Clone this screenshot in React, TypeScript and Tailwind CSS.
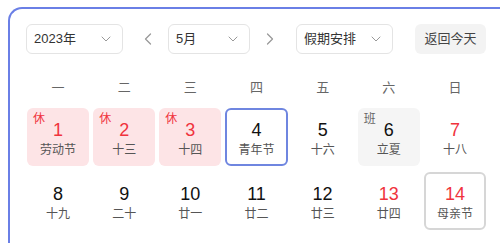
import { ChevronDown, ChevronLeft, ChevronRight } from "lucide-react";

type Day = {
  n: number;
  sub: string;
  tag?: "休" | "班";
  red?: boolean;
  today?: boolean;
  selected?: boolean;
};

const days: Day[] = [
  { n: 1, sub: "劳动节", tag: "休", red: true },
  { n: 2, sub: "十三", tag: "休", red: true },
  { n: 3, sub: "十四", tag: "休", red: true },
  { n: 4, sub: "青年节", today: true },
  { n: 5, sub: "十六" },
  { n: 6, sub: "立夏", tag: "班" },
  { n: 7, sub: "十八", red: true },
  { n: 8, sub: "十九" },
  { n: 9, sub: "二十" },
  { n: 10, sub: "廿一" },
  { n: 11, sub: "廿二" },
  { n: 12, sub: "廿三" },
  { n: 13, sub: "廿四", red: true },
  { n: 14, sub: "母亲节", red: true, selected: true },
];

const weekdays = ["一", "二", "三", "四", "五", "六", "日"];

function Select({ label, width }: { label: string; width: string }) {
  return (
    <div
      className={`flex h-[30px] items-center justify-between rounded-md border border-[#e4e4e4] bg-white pl-[7px] pr-[8px] text-[13px] text-[#333] ${width}`}
    >
      <span>{label}</span>
      <ChevronDown size={16} strokeWidth={1.5} className="text-[#999]" />
    </div>
  );
}

function Cell({ d }: { d: Day }) {
  let box = "border border-transparent";
  if (d.tag === "休") box = "border border-transparent bg-[#fde4e6]";
  if (d.tag === "班") box = "border border-transparent bg-[#f5f5f5]";
  if (d.today) box = "border-2 border-[#6f86e0]";
  if (d.selected) box = "border-2 border-[#d6d6d6]";
  return (
    <div className={`relative flex h-[58px] flex-col items-center justify-center rounded-md ${box}`}>
      {d.tag && (
        <span
          className={`absolute left-[5px] top-[4px] text-[12px] leading-none ${
            d.tag === "休" ? "text-[#f0333d]" : "text-[#666]"
          }`}
        >
          {d.tag}
        </span>
      )}
      <span
        className={`mt-[2px] text-[18px] leading-[20px] ${d.red ? "text-[#f0333d]" : "text-[#111]"}`}
      >
        {d.n}
      </span>
      <span className="mt-[3px] text-[12px] leading-[14px] text-[#555]">{d.sub}</span>
    </div>
  );
}

export default function App() {
  return (
    <div
      className="h-[243px] w-[500px] overflow-hidden bg-white"
      style={{ fontFamily: '"Liberation Sans", "Noto Sans CJK SC", sans-serif' }}
    >
      <div className="ml-[8px] mt-[7px] h-[300px] w-[560px] rounded-tl-[14px] border-l-2 border-t-2 border-[#6a7fe6] pl-[16px] pt-[15px]">
        <div className="flex items-center">
          <Select label="2023年" width="w-[97px]" />
          <ChevronLeft size={20} strokeWidth={1.5} className="ml-[15px] text-[#999]" />
          <div className="ml-[10px]">
            <Select label="5月" width="w-[82px]" />
          </div>
          <ChevronRight size={20} strokeWidth={1.5} className="ml-[10px] text-[#999]" />
          <div className="ml-[16px]">
            <Select label="假期安排" width="w-[97px]" />
          </div>
          <div className="ml-[22px] flex h-[30px] w-[71px] items-center justify-center rounded-md bg-[#f3f3f3] text-[13px] text-[#444]">
            返回今天
          </div>
        </div>

        <div className="ml-[1px] mt-[24px] grid w-[459px] grid-cols-7 gap-x-[4px] text-center text-[13px] leading-[20px] text-[#666]">
          {weekdays.map((w) => (
            <div key={w}>{w}</div>
          ))}
        </div>

        <div className="ml-[1px] mt-[10px] grid w-[459px] grid-cols-7 gap-x-[4px] gap-y-[6px]">
          {days.map((d) => (
            <Cell key={d.n} d={d} />
          ))}
        </div>
      </div>
    </div>
  );
}
